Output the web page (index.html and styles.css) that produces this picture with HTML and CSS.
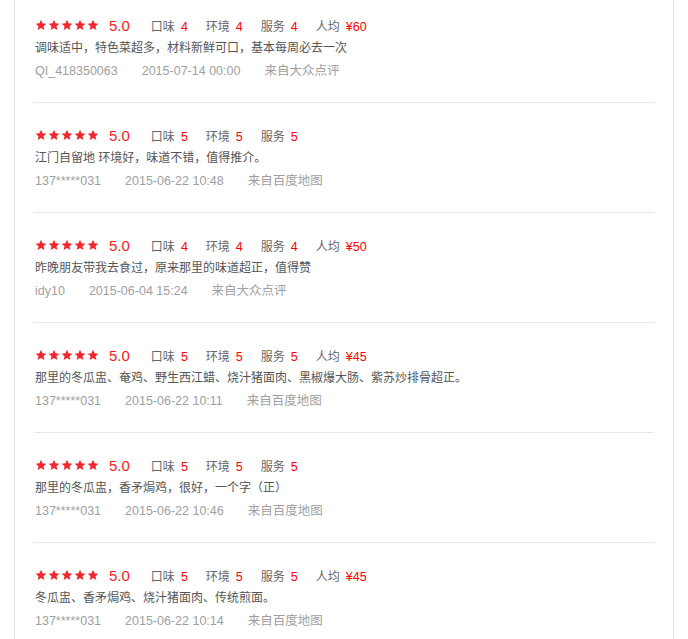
FILE: index.html
```html
<!DOCTYPE html>
<html lang="zh-CN">
<head>
    <meta charset="UTF-8">
    <meta name="viewport" content="width=device-width, initial-scale=1.0">
    <title>评论</title>
    <link rel="stylesheet" href="styles.css">
</head>
<body>
    <div class="comment-box">
        <ul class="comment-list" id="commentList"></ul>
    </div>

    <script>
        // 评论数据
        const comments = [
            {taste: 4, env: 4, service: 4, price: 60, text: "调味适中，特色菜超多，材料新鲜可口，基本每周必去一次", user: "QI_418350063", date: "2015-07-14 00:00", from: "来自大众点评"},
            {taste: 5, env: 5, service: 5, price: null, text: "江门自留地 环境好，味道不错，值得推介。", user: "137*****031", date: "2015-06-22 10:48", from: "来自百度地图"},
            {taste: 4, env: 4, service: 4, price: 50, text: "昨晚朋友带我去食过，原来那里的味道超正，值得赞", user: "idy10", date: "2015-06-04 15:24", from: "来自大众点评"},
            {taste: 5, env: 5, service: 5, price: 45, text: "那里的冬瓜盅、奄鸡、野生西江蜡、烧汁猪面肉、黑椒爆大肠、紫苏炒排骨超正。", user: "137*****031", date: "2015-06-22 10:11", from: "来自百度地图"},
            {taste: 5, env: 5, service: 5, price: null, text: "那里的冬瓜盅，香矛焗鸡，很好，一个字（正）", user: "137*****031", date: "2015-06-22 10:46", from: "来自百度地图"},
            {taste: 5, env: 5, service: 5, price: 45, text: "冬瓜盅、香矛焗鸡、烧汁猪面肉、传统煎面。", user: "137*****031", date: "2015-06-22 10:14", from: "来自百度地图"}
        ];

        const star = '<svg class="star" viewBox="0 0 24 24"><polygon points="12,1.5 15.1,8.6 22.8,9.3 17,14.4 18.7,22 12,18 5.3,22 7,14.4 1.2,9.3 8.9,8.6"/></svg>';
        const list = document.getElementById('commentList');

        comments.forEach(c => {
            const item = document.createElement('li');
            item.className = 'comment-item';
            let price = '';
            if (c.price) {
                price = `<span class="score">人均<em>¥${c.price}</em></span>`;
            }
            item.innerHTML = `
                <div class="rating">
                    <span class="stars">${star.repeat(5)}</span>
                    <span class="total">5.0</span>
                    <span class="score">口味<em>${c.taste}</em></span>
                    <span class="score">环境<em>${c.env}</em></span>
                    <span class="score">服务<em>${c.service}</em></span>
                    ${price}
                </div>
                <p class="comment-text">${c.text}</p>
                <div class="comment-meta">
                    <span>${c.user}</span>
                    <span>${c.date}</span>
                    <span>${c.from}</span>
                </div>`;
            list.appendChild(item);
        });
    </script>
</body>
</html>
```

FILE: styles.css
```css
* {
    box-sizing: border-box;
}
body {
    margin: 0;
    padding: 0;
    background-color: #fff;
    font-family: "Liberation Sans", "Noto Sans CJK SC", sans-serif;
    font-size: 12px;
    color: #555;
}
.comment-box {
    width: 660px;
    margin-left: 14px;
    border-left: 1px solid #e3e3e3;
    border-right: 1px solid #e3e3e3;
    min-height: 639px;
}
.comment-list {
    list-style: none;
    margin: 0;
    padding: 0 19px 0 19px;
}
.comment-item {
    padding: 21px 0 20px 1px;
    border-bottom: 1px solid #e8e8e8;
}
.comment-item:first-child {
    padding-top: 14px;
}
.rating {
    display: flex;
    align-items: center;
    height: 22px;
}
.stars {
    display: flex;
    gap: 1px;
    margin-right: 10px;
}
.star {
    width: 12px;
    height: 12px;
    fill: #f0282d;
}
.total {
    font-size: 15px;
    color: #f41b1b;
    margin-right: 21px;
}
.score {
    color: #666;
    margin-right: 18px;
}
.score em {
    font-style: normal;
    color: #f00;
    margin-left: 6px;
    font-size: 12.5px;
}
.comment-text {
    margin: 0;
    padding-top: 1px;
    line-height: 23px;
    color: #555;
}
.comment-meta {
    display: flex;
    gap: 24px;
    line-height: 22px;
    color: #a0a0a0;
    font-size: 12.5px;
}
```
